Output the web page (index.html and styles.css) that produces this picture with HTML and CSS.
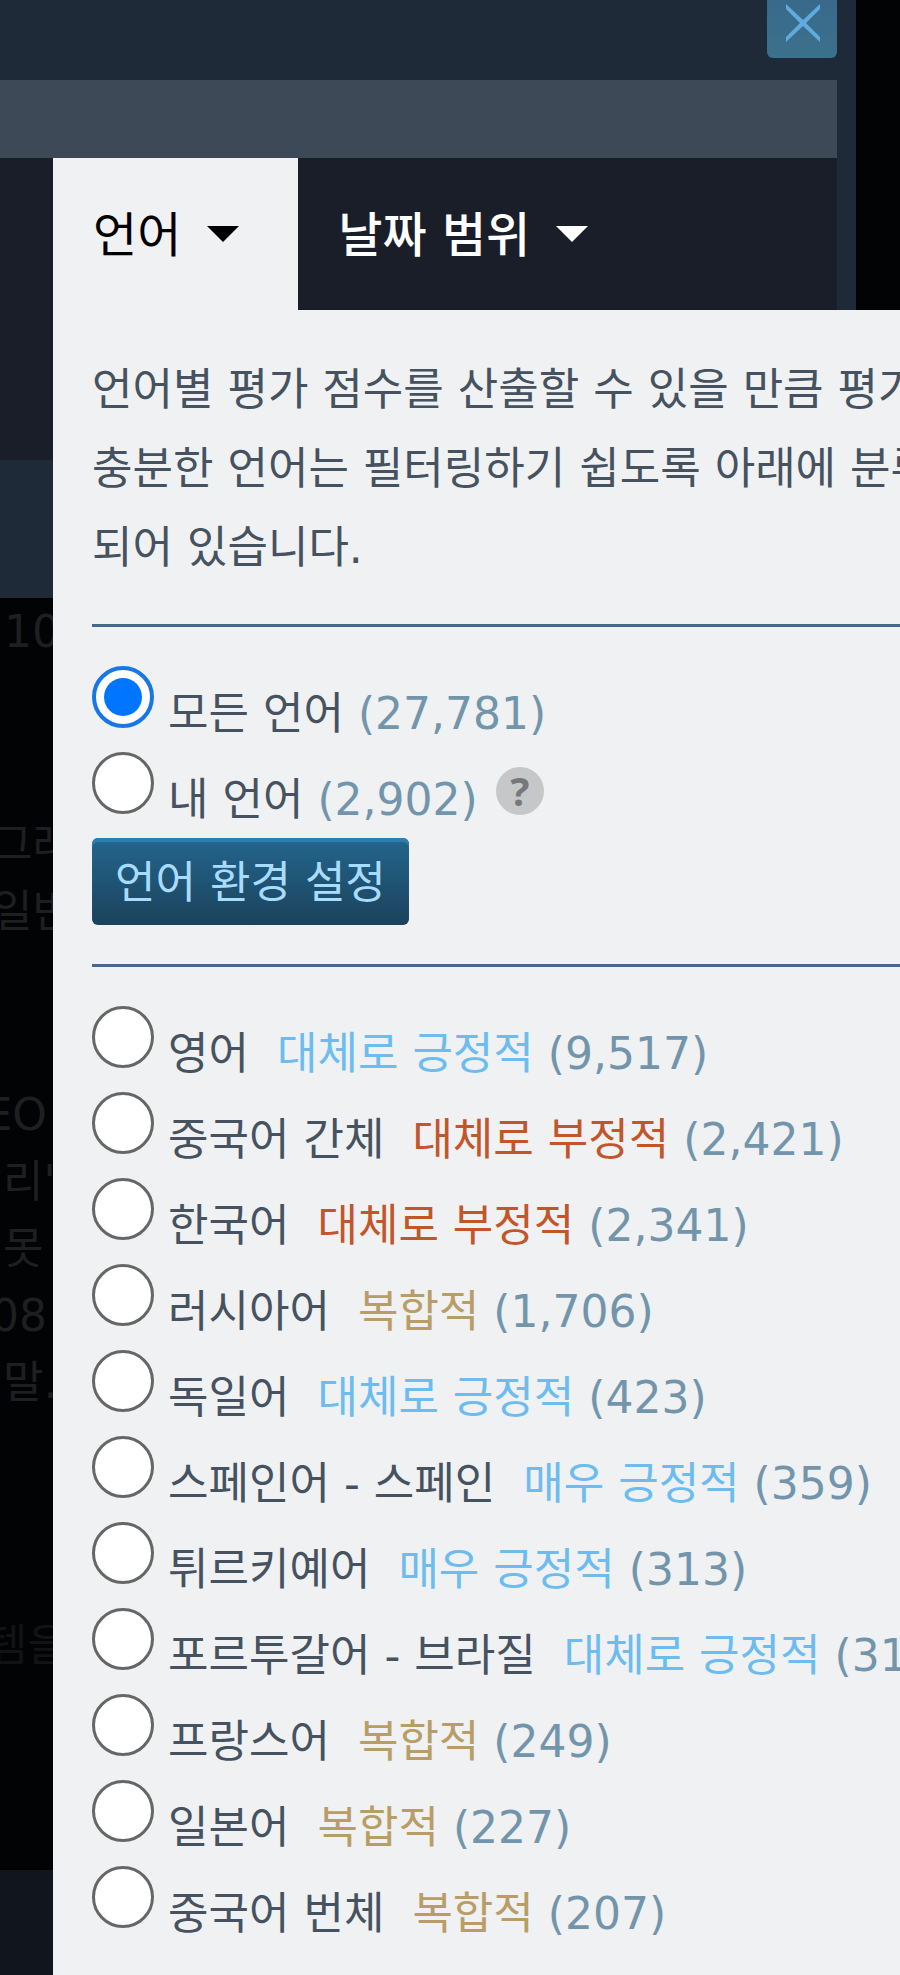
FILE: index.html
```
<!DOCTYPE html>
<html lang="ko">
<head>
    <meta charset="UTF-8">
    <meta name="viewport" content="width=device-width, initial-scale=1.0">
    <title>언어 필터</title>
    <link rel="stylesheet" href="styles.css">
</head>
<body>
    <div class="screen">
        <!-- dimmed store page -->
        <div class="backdrop">
            <div class="dialog">
                <div class="dialog-header">
                    <button class="close" type="button" aria-label="닫기">
                        <svg width="36" height="38" viewBox="0 0 36 38" aria-hidden="true">
                            <path d="M1 0 L18 16 L35 0 V5 L21 19 L35 33 V38 L18 22 L1 38 V33 L15 19 L1 5 Z" fill="#5fabdd"/>
                        </svg>
                    </button>
                </div>
                <div class="dialog-band"></div>
                <div class="dialog-filters"></div>
                <div class="dialog-footer"></div>
            </div>
            <div class="reviews" aria-hidden="true">
                <div class="review date"><p>10</p></div>
                <div class="review cut"><p>그래</p><p>일반</p></div>
                <div class="review lines">
                    <p class="end">EO</p>
                    <p>리'</p>
                    <p>못</p>
                    <p class="end">08</p>
                    <p>말.</p>
                </div>
                <div class="review faint"><p>템을</p></div>
            </div>
            <div class="page-footer"></div>
        </div>

        <div class="filter">
            <div class="tabs">
                <button class="tab active" type="button">언어 <span class="caret"></span></button>
                <button class="tab" type="button">날짜 범위 <span class="caret"></span></button>
            </div>
            <form class="panel">
                <p class="intro">언어별 평가 점수를 산출할 수 있을 만큼 평가가<br>충분한 언어는 필터링하기 쉽도록 아래에 분류<br>되어 있습니다.</p>
                <hr>
                <div class="options">
                    <label class="option"><input type="radio" name="lang" checked><span class="text">모든 언어 <span class="count">(27,781)</span></span></label>
                    <div class="option-row">
                        <label class="option"><input type="radio" name="lang"><span class="text">내 언어 <span class="count">(2,902)</span></span></label>
                        <span class="help">?</span>
                    </div>
                </div>
                <button class="settings" type="button">언어 환경 설정</button>
                <hr>
                <div class="options">
                    <label class="option"><input type="radio" name="lang"><span class="text">영어 <span class="rating positive">대체로 긍정적</span> <span class="count">(9,517)</span></span></label>
                    <label class="option"><input type="radio" name="lang"><span class="text">중국어 간체 <span class="rating negative">대체로 부정적</span> <span class="count">(2,421)</span></span></label>
                    <label class="option"><input type="radio" name="lang"><span class="text">한국어 <span class="rating negative">대체로 부정적</span> <span class="count">(2,341)</span></span></label>
                    <label class="option"><input type="radio" name="lang"><span class="text">러시아어 <span class="rating mixed">복합적</span> <span class="count">(1,706)</span></span></label>
                    <label class="option"><input type="radio" name="lang"><span class="text">독일어 <span class="rating positive">대체로 긍정적</span> <span class="count">(423)</span></span></label>
                    <label class="option"><input type="radio" name="lang"><span class="text">스페인어 - 스페인 <span class="rating positive">매우 긍정적</span> <span class="count">(359)</span></span></label>
                    <label class="option"><input type="radio" name="lang"><span class="text">튀르키예어 <span class="rating positive">매우 긍정적</span> <span class="count">(313)</span></span></label>
                    <label class="option"><input type="radio" name="lang"><span class="text">포르투갈어 - 브라질 <span class="rating positive">대체로 긍정적</span> <span class="count">(310)</span></span></label>
                    <label class="option"><input type="radio" name="lang"><span class="text">프랑스어 <span class="rating mixed">복합적</span> <span class="count">(249)</span></span></label>
                    <label class="option"><input type="radio" name="lang"><span class="text">일본어 <span class="rating mixed">복합적</span> <span class="count">(227)</span></span></label>
                    <label class="option"><input type="radio" name="lang"><span class="text">중국어 번체 <span class="rating mixed">복합적</span> <span class="count">(207)</span></span></label>
                </div>
            </form>
        </div>
    </div>
</body>
</html>
```
FILE: styles.css
```
* {
    box-sizing: border-box;
}
body {
    margin: 0;
    background: #020305;
    color: #46525f;
    font-family: "DejaVu Sans", "Noto Sans CJK KR", sans-serif;
    font-size: 44px;
}
p {
    margin: 0;
}
button {
    border: none;
    font-family: inherit;
    cursor: pointer;
}

/* the filter is stacked over the backdrop in one grid cell */
.screen {
    display: grid;
    grid-template-columns: minmax(0, 1fr);
    min-height: 100vh;
    overflow: hidden;
}
.backdrop, .filter {
    grid-area: 1 / 1;
    display: flex;
    flex-direction: column;
}

/* backdrop */
.dialog {
    margin-right: 44px;
    padding-right: 19px;
    background: #1f2a38;
}
.dialog-header {
    display: flex;
    justify-content: flex-end;
    align-items: flex-start;
    height: 80px;
}
.close {
    display: flex;
    justify-content: center;
    align-items: flex-start;
    width: 70px;
    height: 58px;
    padding: 4px 0 0 2px;
    border-radius: 0 0 6px 6px;
    background: linear-gradient(#38698a, #3c718c);
}
.dialog-band {
    height: 78px;
    background: #3e4958;
}
.dialog-filters {
    height: 302px;
    background: #1a1e29;
}
.dialog-footer {
    height: 138px;
}
.reviews {
    flex: 1;
    width: 53px;
    overflow: hidden;
    color: #1e1f21;
    line-height: 67px;
    white-space: nowrap;
}
.review.date {
    padding-left: 4px;
    margin-bottom: 146px;
}
.review.cut {
    margin-left: -8px;
    margin-bottom: 136px;
}
.review.lines {
    padding-left: 3px;
    margin-bottom: 196px;
}
.review.faint {
    margin-left: -13px;
    color: #121315;
}
.end {
    display: flex;
    justify-content: flex-end;
    padding-right: 6px;
}
.page-footer {
    height: 105px;
    background: #11151e;
}

/* filter tabs */
.filter {
    padding-top: 158px;
    padding-left: 53px;
}
.tabs {
    display: flex;
}
.tab {
    display: flex;
    align-items: center;
    gap: 26px;
    height: 152px;
    padding: 0 59px 6px 40px;
    background: none;
    color: #fff;
    font-size: 48px;
    font-weight: 500;
    white-space: nowrap;
}
.tab.active {
    background: #eff1f2;
    color: #000;
    font-weight: 400;
}
.caret {
    margin-top: 6px;
    border: 16px solid transparent;
    border-top-color: currentColor;
    border-bottom: none;
}

/* filter panel */
.panel {
    flex: 1;
    padding: 40px 0 20px 39px;
    background: #eff1f2;
    white-space: nowrap;
}
.intro {
    margin-bottom: -2px;
    line-height: 79px;
}
hr {
    height: 3px;
    margin: 39px 0;
    border: none;
    background: #44698c;
}
.options {
    display: flex;
    flex-direction: column;
}
.option-row {
    display: flex;
}
.option {
    display: flex;
    align-items: flex-start;
    gap: 14px;
    height: 86px;
}
.option input {
    appearance: none;
    flex: none;
    display: grid;
    place-items: center;
    width: 62px;
    height: 62px;
    margin: 0;
    border: 3px solid #666;
    border-radius: 50%;
    background: #fff;
}
.option input:checked {
    border: 4px solid #1877e6;
}
.option input:checked::before {
    content: "";
    width: 38px;
    height: 38px;
    border-radius: 50%;
    background: #0075ff;
}
.text {
    padding-top: 8px;
    line-height: 80px;
}
.count {
    color: #7395ac;
}
.rating {
    margin-left: 14px;
}
.positive {
    color: #6cbcf0;
}
.negative {
    color: #c2562a;
}
.mixed {
    color: #b99d66;
}
.help {
    width: 48px;
    height: 48px;
    margin: 15px 0 0 18px;
    border-radius: 50%;
    background: #c6c7c8;
    color: #77787a;
    font-family: "Noto Sans", sans-serif;
    font-size: 40px;
    font-weight: 700;
    line-height: 48px;
    text-align: center;
}
.settings {
    display: block;
    height: 87px;
    padding: 0 23px 5px;
    border-radius: 6px;
    background: linear-gradient(#23668d, #1b425b);
    box-shadow: inset 0 4px 1px #2e7fb1;
    color: #a8dcff;
    font-size: 44px;
}
```
